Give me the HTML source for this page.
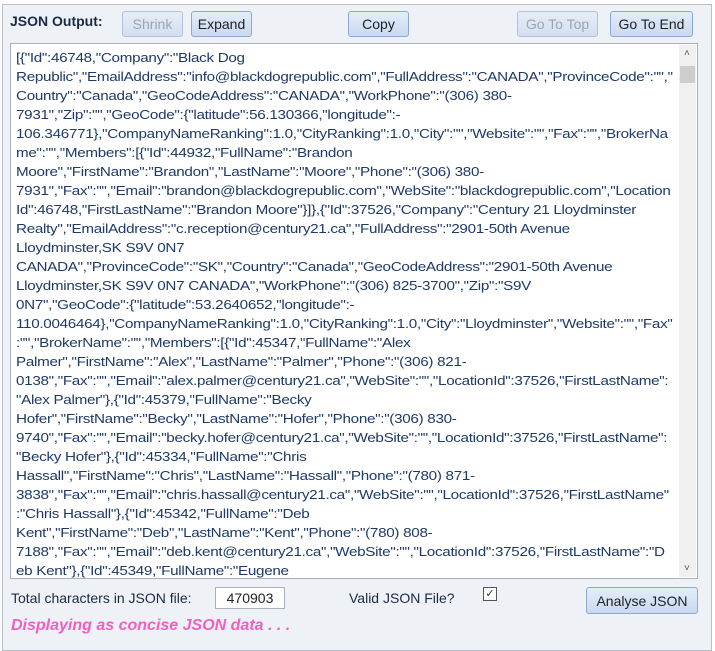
<!DOCTYPE html>
<html><head><meta charset="utf-8"><style>
body{margin:0;width:715px;height:644px;background:#fff;font-family:"Liberation Sans",sans-serif;position:relative;overflow:hidden}
.panel{position:absolute;left:2px;top:4px;width:708px;height:645px;background:#eef1f6;border:1px solid #b9bfc8}
.lbl{position:absolute;left:10px;top:13px;font-weight:bold;font-size:14px;color:#1b2a44}
.btn{position:absolute;top:11px;height:26px;border:1px solid #8ea8cf;border-radius:3px;background:linear-gradient(#e4edf9,#c9d9f0);font-size:14px;color:#222;display:flex;align-items:center;justify-content:center;box-sizing:border-box}
.dis{color:#9aa6b6;border-color:#b2c2da;background:linear-gradient(#e6edf7,#d3dfef)}
.box{position:absolute;left:10px;top:43px;width:688px;height:536px;background:#fff;border:1px solid #a9b0ba;box-sizing:border-box;overflow:hidden}
.txt{position:absolute;left:5px;top:4px;width:566px;font-size:13px;line-height:19px;color:#1e3a66;letter-spacing:-0.25px;transform:scaleX(1.17);transform-origin:0 0}
.txt div{white-space:nowrap;overflow:hidden}
.sb{position:absolute;right:1px;top:1px;width:17px;height:532px;background:#f0f0f0}
.thumb{position:absolute;left:1px;top:21px;width:15px;height:17px;background:#cdcdcd}
.bot{position:absolute;font-size:14px;color:#1b2a44}
</style></head><body>
<div class="panel"></div>
<div class="lbl">JSON Output:</div>
<div class="btn dis" style="left:122px;width:61px">Shrink</div>
<div class="btn" style="left:191px;width:61px">Expand</div>
<div class="btn" style="left:348px;width:61px">Copy</div>
<div class="btn dis" style="left:517px;width:81px">Go To Top</div>
<div class="btn" style="left:610px;width:83px">Go To End</div>
<div class="box"><div class="txt">
<div>[{"Id":46748,"Company":"Black Dog</div>
<div>Republic","EmailAddress":"info@blackdogrepublic.com","FullAddress":"CANADA","ProvinceCode":"","</div>
<div>Country":"Canada","GeoCodeAddress":"CANADA","WorkPhone":"(306) 380-</div>
<div>7931","Zip":"","GeoCode":{"latitude":56.130366,"longitude":-</div>
<div>106.346771},"CompanyNameRanking":1.0,"CityRanking":1.0,"City":"","Website":"","Fax":"","BrokerNa</div>
<div>me":"","Members":[{"Id":44932,"FullName":"Brandon</div>
<div>Moore","FirstName":"Brandon","LastName":"Moore","Phone":"(306) 380-</div>
<div>7931","Fax":"","Email":"brandon@blackdogrepublic.com","WebSite":"blackdogrepublic.com","Location</div>
<div>Id":46748,"FirstLastName":"Brandon Moore"}]},{"Id":37526,"Company":"Century 21 Lloydminster</div>
<div>Realty","EmailAddress":"c.reception@century21.ca","FullAddress":"2901-50th Avenue</div>
<div>Lloydminster,SK S9V 0N7</div>
<div>CANADA","ProvinceCode":"SK","Country":"Canada","GeoCodeAddress":"2901-50th Avenue</div>
<div>Lloydminster,SK S9V 0N7 CANADA","WorkPhone":"(306) 825-3700","Zip":"S9V</div>
<div>0N7","GeoCode":{"latitude":53.2640652,"longitude":-</div>
<div>110.0046464},"CompanyNameRanking":1.0,"CityRanking":1.0,"City":"Lloydminster","Website":"","Fax"</div>
<div>:"","BrokerName":"","Members":[{"Id":45347,"FullName":"Alex</div>
<div>Palmer","FirstName":"Alex","LastName":"Palmer","Phone":"(306) 821-</div>
<div>0138","Fax":"","Email":"alex.palmer@century21.ca","WebSite":"","LocationId":37526,"FirstLastName":</div>
<div>"Alex Palmer"},{"Id":45379,"FullName":"Becky</div>
<div>Hofer","FirstName":"Becky","LastName":"Hofer","Phone":"(306) 830-</div>
<div>9740","Fax":"","Email":"becky.hofer@century21.ca","WebSite":"","LocationId":37526,"FirstLastName":</div>
<div>"Becky Hofer"},{"Id":45334,"FullName":"Chris</div>
<div>Hassall","FirstName":"Chris","LastName":"Hassall","Phone":"(780) 871-</div>
<div>3838","Fax":"","Email":"chris.hassall@century21.ca","WebSite":"","LocationId":37526,"FirstLastName"</div>
<div>:"Chris Hassall"},{"Id":45342,"FullName":"Deb</div>
<div>Kent","FirstName":"Deb","LastName":"Kent","Phone":"(780) 808-</div>
<div>7188","Fax":"","Email":"deb.kent@century21.ca","WebSite":"","LocationId":37526,"FirstLastName":"D</div>
<div>eb Kent"},{"Id":45349,"FullName":"Eugene</div>
</div>
<div class="sb"><div style="position:absolute;top:3px;left:5px;font-size:10px;color:#555">&#708;</div><div class="thumb"></div><div style="position:absolute;bottom:3px;left:5px;font-size:10px;color:#555">&#709;</div></div>
</div>
<div class="bot" style="left:11px;top:590px">Total characters in JSON file:</div>
<div style="position:absolute;left:215px;top:587px;width:70px;height:22px;background:#fff;border:1px solid #a9b0ba;box-sizing:border-box;font-size:14px;text-align:center;line-height:20px;color:#222">470903</div>
<div class="bot" style="left:349px;top:590px">Valid JSON File?</div>
<div style="position:absolute;left:483px;top:587px;width:12px;height:12px;border:1px solid #555;background:#fff;font-size:11px;line-height:12px;text-align:center;color:#333">&#10003;</div>
<div class="btn" style="left:586px;top:587px;width:112px;height:27px;font-size:14px">Analyse JSON</div>
<div style="position:absolute;left:11px;top:617px;font-size:16px;font-weight:bold;font-style:italic;color:#f25fc3">Displaying as concise JSON data . . .</div>
</body></html>
